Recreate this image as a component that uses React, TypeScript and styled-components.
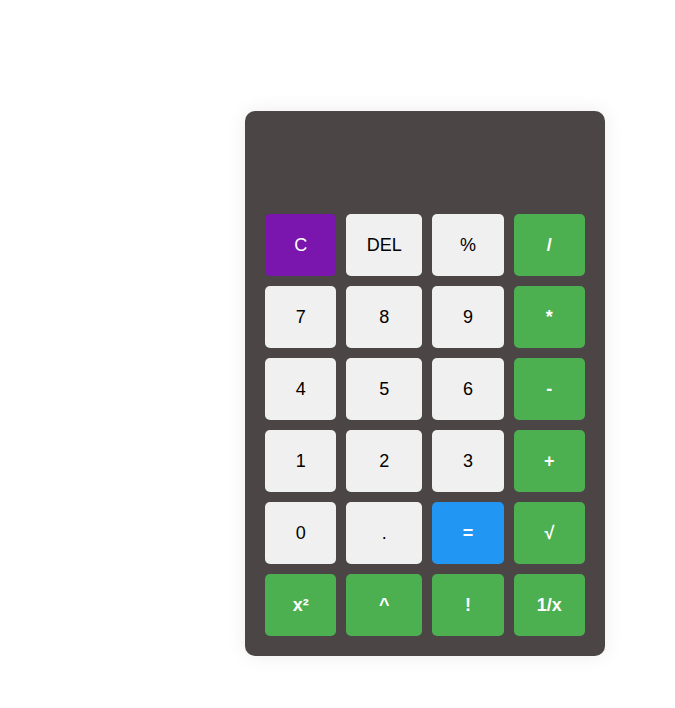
import React from "react";
import styled, { createGlobalStyle } from "styled-components";

const Global = createGlobalStyle`
  html, body { margin: 0; padding: 0; background: #ffffff; }
  body { font-family: "Liberation Sans", Arial, sans-serif; }
`;

const Page = styled.div`
  padding: 111px 0 52px 245px;
`;

const Card = styled.div`
  width: 360px;
  box-sizing: border-box;
  padding: 20px;
  background: #4b4545;
  border-radius: 10px;
  box-shadow: 0 0 20px rgba(0, 0, 0, 0.08);
`;

const Display = styled.div`
  height: 73px;
  margin-bottom: 10px;
  color: #ffffff;
  font-size: 32px;
  text-align: right;
`;

const Keys = styled.div`
  display: grid;
  grid-template-columns: repeat(4, 1fr);
  gap: 10px;
`;

type Kind = "num" | "op" | "clear" | "eq";

const bg: Record<Kind, string> = {
  num: "#f0f0f0",
  op: "#4caf50",
  clear: "#7a16ae",
  eq: "#2196f3",
};

const Key = styled.button<{ $kind: Kind }>`
  border: none;
  border-radius: 5px;
  padding: 20px 20.5px;
  height: 62px;
  font-family: "Liberation Sans", Arial, sans-serif;
  font-size: 18px;
  background: ${(p) => bg[p.$kind]};
  color: ${(p) => (p.$kind === "num" ? "#000000" : "#ffffff")};
  font-weight: ${(p) => (p.$kind === "op" || p.$kind === "eq" ? 700 : 400)};
  cursor: pointer;
`;

const keys: [string, Kind][] = [
  ["C", "clear"], ["DEL", "num"], ["%", "num"], ["/", "op"],
  ["7", "num"], ["8", "num"], ["9", "num"], ["*", "op"],
  ["4", "num"], ["5", "num"], ["6", "num"], ["-", "op"],
  ["1", "num"], ["2", "num"], ["3", "num"], ["+", "op"],
  ["0", "num"], [".", "num"], ["=", "eq"], ["√", "op"],
  ["x²", "op"], ["^", "op"], ["!", "op"], ["1/x", "op"],
];

export default function App() {
  return (
    <Page>
      <Global />
      <Card>
        <Display />
        <Keys>
          {keys.map(([label, kind]) => (
            <Key key={label} $kind={kind}>
              {label}
            </Key>
          ))}
        </Keys>
      </Card>
    </Page>
  );
}
